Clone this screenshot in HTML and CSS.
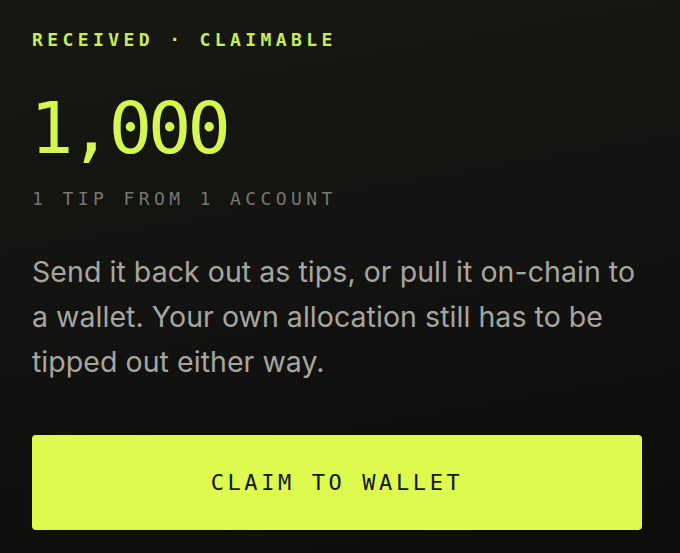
FILE: index.html
```html
<!DOCTYPE html>
<html lang="en">
<head>
<meta charset="utf-8">
<link rel="stylesheet" href="styles.css">
</head>
<body>
<main class="card">
  <div class="eyebrow">RECEIVED · CLAIMABLE</div>
  <div class="amount">1,000</div>
  <div class="meta">1 TIP FROM 1 ACCOUNT</div>
  <p class="desc">Send it back out as tips, or pull it on-chain to a wallet. Your own allocation still has to be tipped out either way.</p>
  <button class="claim">CLAIM TO WALLET</button>
</main>
</body>
</html>
```
FILE: styles.css
```css
html, body {
  margin: 0;
  height: 100%;
}
body {
  background: linear-gradient(170deg, #171712 0%, #121210 50%, #0c0c0b 100%);
  font-family: "DejaVu Sans Mono", monospace;
}
.card {
  display: flex;
  flex-direction: column;
  padding: 30px 39px 0 32px;
}
.eyebrow, .meta {
  font-size: 18px;
  line-height: 20px;
  letter-spacing: 4.4px;
  font-weight: bold;
}
.eyebrow {
  color: #c9ee55;
}
.amount {
  margin-top: 42px;
  font-size: 72px;
  line-height: 72px;
  letter-spacing: -4px;
  color: #d4f752;
  margin-left: -2px;
}
.meta {
  margin-top: 25px;
  color: #77776f;
  font-weight: normal;
}
.desc {
  margin: 40px 0 0;
  font-family: "Inter", "Noto Sans", sans-serif;
  font-size: 28.5px;
  line-height: 45px;
  letter-spacing: 0.05px;
  color: #a6a69f;
}
.claim {
  margin-top: 51px;
  height: 95px;
  width: 610px;
  border: 0;
  border-radius: 4px;
  background: #dcfb4e;
  color: #141410;
  font-family: "DejaVu Sans Mono", monospace;
  font-size: 22px;
  letter-spacing: 3.6px;
  cursor: pointer;
}
```
